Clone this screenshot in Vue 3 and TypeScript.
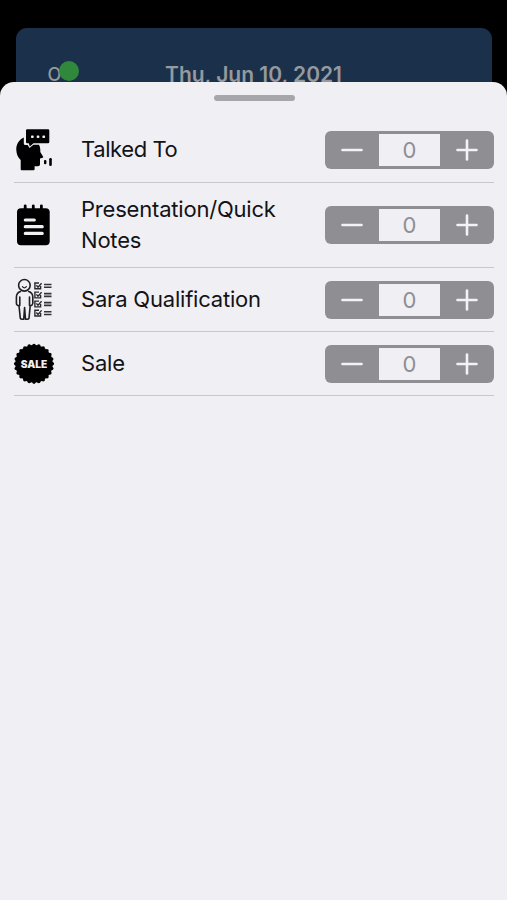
<script setup lang="ts">
import { ref } from 'vue'

type IconName = 'talk' | 'notes' | 'qualify' | 'sale'
interface Activity {
  icon: IconName
  label: string
  count: number
}

const activities = ref<Activity[]>([
  { icon: 'talk', label: 'Talked To', count: 0 },
  { icon: 'notes', label: 'Presentation/Quick Notes', count: 0 },
  { icon: 'qualify', label: 'Sara Qualification', count: 0 },
  { icon: 'sale', label: 'Sale', count: 0 },
])

const checks = [15.8, 24.9, 33.9, 43]

// Scalloped edge of the sale badge
const teeth = Array.from({ length: 24 }, (_, i) => {
  const a = (i * Math.PI) / 12
  return { x: 29 + 18.3 * Math.cos(a), y: 29.8 + 18.3 * Math.sin(a) }
})

function change(item: Activity, by: number) {
  item.count = Math.max(0, item.count + by)
}
</script>

<template>
  <div class="screen">
    <header class="card">
      <span class="status">O<i class="dot"></i></span>
      <span class="date">Thu, Jun 10, 2021</span>
    </header>
    <main class="sheet">
      <div class="grabber"></div>
      <ul class="list">
        <li v-for="item in activities" :key="item.icon" class="row">
          <svg v-if="item.icon === 'talk'" class="icon" viewBox="0 0 60 60">
            <path d="M21 10.5Q21 9.3 22.2 9.3H43Q44.3 9.3 44.3 10.5V22Q44.3 23.2 43 23.2H28.5L24.8 26.5 23.8 23.2H22.2Q21 23.2 21 22Z" />
            <path d="M18.8 17.6C13.5 20 11 25 11.3 30C11.5 34.5 13 37.5 15.7 40V49.3Q15.7 50.2 16.7 50.2H28.6Q29.6 50.2 29.6 49.2V46.3H33Q35 46.3 35 44.2V38.6L37.7 37.8Q38.6 37.4 38 36.4L35.3 32C35.5 29 35 26.7 34 24.8H28.4L24.5 28 22.7 25H20.4Q18.8 25 18.8 23.4Z" />
            <g fill="#f0eff4">
              <rect x="26" y="15.6" width="2.7" height="2.5" rx=".8" />
              <rect x="31.7" y="15.6" width="2.7" height="2.5" rx=".8" />
              <rect x="37.4" y="15.6" width="2.7" height="2.5" rx=".8" />
            </g>
            <rect x="39" y="40" width="2.4" height="4.2" rx="1" />
            <rect x="44.2" y="38" width="2.6" height="8" rx="1.2" />
          </svg>
          <svg v-else-if="item.icon === 'notes'" class="icon" viewBox="0 0 60 60">
            <rect x="12" y="13.3" width="32.7" height="37" rx="4" />
            <path d="M20.2 10.8V15M28.3 10.8V15M36.4 10.8V15" stroke="#000" stroke-width="2.8" stroke-linecap="round" />
            <path d="M20.3 25H29.3M20.3 31.7H37.2M20.3 38.4H37.2" stroke="#f0eff4" stroke-width="3.2" stroke-linecap="round" />
          </svg>
          <svg v-else-if="item.icon === 'qualify'" class="icon" viewBox="0 0 60 60">
            <g fill="none" stroke="#202024" stroke-width="1.6" stroke-linejoin="round" stroke-linecap="round">
              <circle cx="19.4" cy="15.3" r="5.8" />
              <path d="M17.4 16.7Q19.4 19 21.4 16.7" stroke-width="1.2" />
              <path d="M15.5 21.5C12.6 22.3 11.5 24 11.4 27V33.5Q11.6 35.5 14 35.7L15.3 48.3Q15.6 49.6 18.7 49.2L19.6 37.5 20.5 49.2Q23.7 49.6 24 48.3L25.2 35.7Q27.5 35.5 27.8 33.5V27C27.7 24 26.6 22.3 23.7 21.5M14.8 27V35.4M24.5 27V35.4" />
            </g>
            <g v-for="y in checks" :key="y" :transform="`translate(24 ${y - 3.5})`">
              <path d="M10 .7H5.9V6.5H11.6V3.6M7.4 3L9 4.9L12.6 .9" fill="none" stroke="#29292c" stroke-width="1.4" />
              <path d="M15 2.2H22.5M15 5H22.5" stroke="#343438" stroke-width="1.6" />
            </g>
          </svg>
          <svg v-else class="icon" viewBox="0 0 60 60">
            <circle cx="29" cy="29.8" r="18.8" />
            <circle v-for="(t, i) in teeth" :key="i" :cx="t.x" :cy="t.y" r="1.8" />
            <text x="29" y="33.6" text-anchor="middle" textLength="26.5" lengthAdjust="spacingAndGlyphs" class="seal">SALE</text>
          </svg>
          <span class="label">{{ item.label }}</span>
          <div class="stepper">
            <button aria-label="Decrease" @click="change(item, -1)">
              <svg viewBox="0 0 24 24"><path d="M2.5 12H21.5" /></svg>
            </button>
            <output>{{ item.count }}</output>
            <button aria-label="Increase" @click="change(item, 1)">
              <svg viewBox="0 0 24 24"><path d="M2.5 12H21.5M12 2.5V21.5" /></svg>
            </button>
          </div>
        </li>
      </ul>
    </main>
  </div>
</template>

<style>
body {
  background: #000;
}
</style>

<style scoped>
.screen {
  height: 900px;
  padding-top: 28px;
  box-sizing: border-box;
  overflow: hidden;
  background: #000;
  font-family: Inter, sans-serif;
  display: flex;
  flex-direction: column;
}
.card {
  box-sizing: border-box;
  height: 66px;
  margin: 0 15.5px -12px;
  flex: none;
  border-radius: 11px 11px 0 0;
  background: #1b314b;
  color: #96999d;
  display: grid;
  grid-template-columns: 1fr auto 1fr;
  padding: 33px 32px 0;
  line-height: 28px;
}
.status {
  display: flex;
  font-size: 18px;
  font-weight: 500;
  line-height: 27px;
}
.dot {
  width: 20px;
  height: 20px;
  margin-left: -2px;
  border-radius: 50%;
  background: #30883c;
}
.date {
  font-size: 21px;
  font-weight: 600;
  white-space: nowrap;
}
.sheet {
  flex: 1;
  position: relative;
  border-radius: 14px 14px 0 0;
  background: #f0eff4;
  padding: 13px 13px 0 14px;
}
.grabber {
  width: 81px;
  height: 6px;
  margin: 0 auto;
  border-radius: 3px;
  background: #a7a6aa;
}
.list {
  list-style: none;
  margin: 17px 0 0;
  padding: 0;
}
.row {
  box-sizing: border-box;
  min-height: 64px;
  padding: 11px 0;
  border-bottom: 1px solid #c9c8cd;
  display: flex;
  align-items: center;
}
.row:first-child {
  min-height: 65px;
}
.row:first-child .label {
  letter-spacing: -0.4px;
  padding-bottom: 1px;
}
.icon {
  width: 60px;
  height: 60px;
  margin: -12px 7px -12px -9px;
  flex: none;
}
.seal {
  fill: #f0eff4;
  font: 900 10px Inter, sans-serif;
}
.label {
  flex: 1;
  padding-left: 9px;
  padding-right: 32px;
  font-size: 22px;
  line-height: 31px;
  letter-spacing: -0.2px;
  color: #131316;
}
.stepper {
  box-sizing: border-box;
  width: 169px;
  height: 38px;
  flex: none;
  padding: 3px 0;
  border-radius: 6px;
  background: #8f8e93;
  display: grid;
  grid-template-columns: 54px 61px 54px;
}
.stepper button {
  border: 0;
  padding: 0;
  background: none;
  display: grid;
  place-items: center;
}
.stepper svg {
  width: 24px;
  height: 24px;
  fill: none;
  stroke: #f3f2f7;
  stroke-width: 2.6;
  stroke-linecap: round;
}
.stepper output {
  background: #f0eff4;
  color: #8f8e93;
  font-size: 22px;
  line-height: 32px;
  text-align: center;
}
</style>
